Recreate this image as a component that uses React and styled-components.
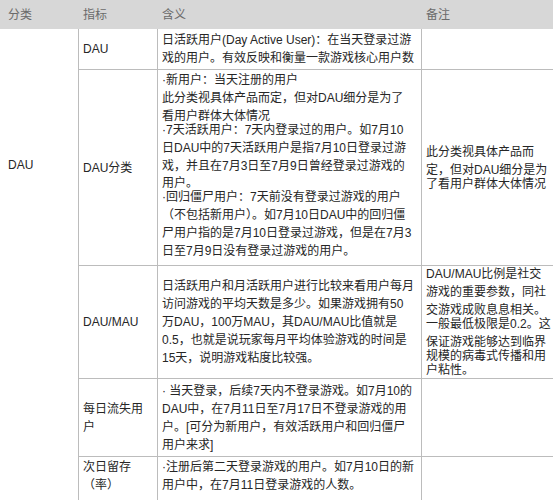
import React from "react";
import styled, { createGlobalStyle } from "styled-components";

const Global = createGlobalStyle`
  html, body { margin: 0; padding: 0; background: #ffffff; }
  body { width: 553px; height: 500px; overflow: hidden; }
`;

const COLS = "78px 79px 264px 132px";
const LINE = "#bcbcbc";

const Page = styled.div`
  width: 553px;
  font-family: "Liberation Sans", "Noto Sans CJK SC", sans-serif;
  font-size: 12px;
  color: #262626;
`;

const Header = styled.div`
  display: grid;
  grid-template-columns: ${COLS};
  height: 29px;
  background: #d7d7d7;
  color: #6a6a6a;
  align-items: center;
`;

const HeadCell = styled.div`
  padding-left: ${(p) => (p.$first ? 8 : 5)}px;
  line-height: 18px;
`;

const Body = styled.div`
  display: grid;
  grid-template-columns: ${COLS};
  grid-template-rows: 41px 196px 113px 78px 80px;
`;

const Category = styled.div`
  grid-column: 1;
  grid-row: 1 / -1;
  padding: 127px 0 0 8px;
  line-height: 18px;
`;

const Cell = styled.div`
  border-left: 1px solid ${LINE};
  border-bottom: 1px solid ${LINE};
  padding: ${(p) => (p.$top ? `${p.$top}px` : "0")} 4px 0 4px;
  display: flex;
  flex-direction: column;
  justify-content: ${(p) => (p.$top !== undefined ? "flex-start" : "center")};
  overflow: hidden;
`;

const Line = styled.span`
  display: block;
  white-space: nowrap;
  line-height: 18px;
  margin-top: ${(p) => (p.$pull ? -p.$pull : 0)}px;
`;

function Lines({ items }) {
  return items.map((it, i) =>
    typeof it === "string" ? (
      <Line key={i}>{it}</Line>
    ) : (
      <Line key={i} $pull={it.pull}>
        {it.t}
      </Line>
    )
  );
}

export default function App() {
  return (
    <Page>
      <Global />
      <Header>
        <HeadCell $first>分类</HeadCell>
        <HeadCell>指标</HeadCell>
        <HeadCell>含义</HeadCell>
        <HeadCell>备注</HeadCell>
      </Header>
      <Body>
        <Category>DAU</Category>

        <Cell>
          <Lines items={["DAU"]} />
        </Cell>
        <Cell>
          <Lines
            items={[
              "日活跃用户(Day Active User)：在当天登录过游",
              "戏的用户。有效反映和衡量一款游戏核心用户数",
            ]}
          />
        </Cell>
        <Cell />

        <Cell>
          <Lines items={["DAU分类"]} />
        </Cell>
        <Cell $top={1}>
          <Lines
            items={[
              "·新用户：当天注册的用户",
              "此分类视具体产品而定，但对DAU细分是为了",
              "看用户群体大体情况",
              { t: "·7天活跃用户：7天内登录过的用户。如7月10", pull: 4 },
              "日DAU中的7天活跃用户是指7月10日登录过游",
              "戏，并且在7月3日至7月9日曾经登录过游戏的",
              { t: "用户。", pull: 1 },
              { t: "·回归僵尸用户：7天前没有登录过游戏的用户", pull: 4 },
              "（不包括新用户）。如7月10日DAU中的回归僵",
              "尸用户指的是7月10日登录过游戏，但是在7月3",
              "日至7月9日没有登录过游戏的用户。",
            ]}
          />
        </Cell>
        <Cell>
          <Lines
            items={[
              "此分类视具体产品而",
              "定，但对DAU细分是为",
              { t: "了看用户群体大体情况", pull: 4 },
            ]}
          />
        </Cell>

        <Cell>
          <Lines items={["DAU/MAU"]} />
        </Cell>
        <Cell>
          <Lines
            items={[
              "日活跃用户和月活跃用户进行比较来看用户每月",
              "访问游戏的平均天数是多少。如果游戏拥有50",
              "万DAU，100万MAU，其DAU/MAU比值就是",
              "0.5，也就是说玩家每月平均体验游戏的时间是",
              "15天，说明游戏粘度比较强。",
            ]}
          />
        </Cell>
        <Cell>
          <Lines
            items={[
              "DAU/MAU比例是社交",
              "游戏的重要参数，同社",
              "交游戏成败息息相关。",
              { t: "一般最低极限是0.2。这", pull: 4 },
              "保证游戏能够达到临界",
              { t: "规模的病毒式传播和用", pull: 4 },
              { t: "户粘性。", pull: 4 },
            ]}
          />
        </Cell>

        <Cell>
          <Lines items={["每日流失用", "户"]} />
        </Cell>
        <Cell>
          <Lines
            items={[
              "· 当天登录，后续7天内不登录游戏。如7月10的",
              "DAU中，在7月11日至7月17日不登录游戏的用",
              "户。[可分为新用户，有效活跃用户和回归僵尸",
              "用户来求]",
            ]}
          />
        </Cell>
        <Cell />

        <Cell $top={1}>
          <Lines items={["次日留存", "（率）"]} />
        </Cell>
        <Cell $top={1}>
          <Lines
            items={[
              "·注册后第二天登录游戏的用户。如7月10日的新",
              "用户中，在7月11日登录游戏的人数。",
            ]}
          />
        </Cell>
        <Cell />
      </Body>
    </Page>
  );
}
